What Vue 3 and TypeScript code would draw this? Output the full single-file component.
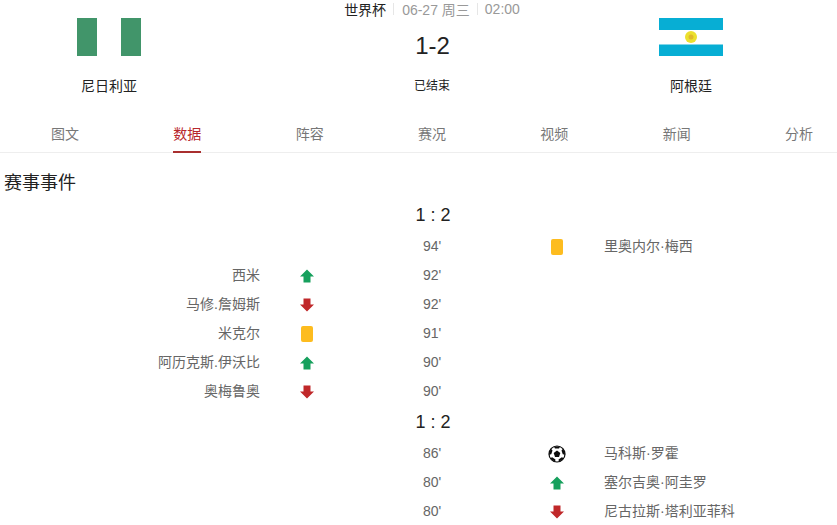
<script setup lang="ts">
type Kind = 'up' | 'down' | 'card' | 'ball'
interface Row { score?: string; min?: string; left?: string; leftIcon?: Kind; right?: string; rightIcon?: Kind }

const tabs = ['图文', '数据', '阵容', '赛况', '视频', '新闻', '分析']
const angles = [0, 72, 144, 216, 288]
const rows: Row[] = [
  { score: '1 : 2' },
  { min: "94'", right: '里奥内尔·梅西', rightIcon: 'card' },
  { min: "92'", left: '西米', leftIcon: 'up' },
  { min: "92'", left: '马修.詹姆斯', leftIcon: 'down' },
  { min: "91'", left: '米克尔', leftIcon: 'card' },
  { min: "90'", left: '阿历克斯.伊沃比', leftIcon: 'up' },
  { min: "90'", left: '奥梅鲁奥', leftIcon: 'down' },
  { score: '1 : 2' },
  { min: "86'", right: '马科斯·罗霍', rightIcon: 'ball' },
  { min: "80'", right: '塞尔吉奥·阿圭罗', rightIcon: 'up' },
  { min: "80'", right: '尼古拉斯·塔利亚菲科', rightIcon: 'down' },
]
</script>

<template>
  <div class="page">
    <header class="match">
      <div class="team">
        <svg class="flag" viewBox="0 0 64 38" width="64" height="38">
          <rect width="20" height="38" fill="#41956a" />
          <rect x="44" width="20" height="38" fill="#41956a" />
        </svg>
        <div class="team-name">尼日利亚</div>
      </div>
      <div class="center">
        <div class="meta">
          <span class="league">世界杯</span><i class="sep first"></i><span>06-27 周三</span><i class="sep"></i><span>02:00</span>
        </div>
        <div class="score">1-2</div>
        <div class="status">已结束</div>
      </div>
      <div class="team">
        <svg class="flag" viewBox="0 0 64 38" width="64" height="38">
          <rect width="64" height="12" fill="#07aed4" />
          <rect y="26.5" width="64" height="11.5" fill="#07aed4" />
          <circle cx="32" cy="19" r="6" fill="#ece02e" />
          <circle cx="32" cy="19" r="2.5" fill="#e0b92a" />
        </svg>
        <div class="team-name">阿根廷</div>
      </div>
    </header>

    <nav class="tabs">
      <a v-for="t in tabs" :key="t" class="tab" :class="{ active: t === '数据' }">{{ t }}</a>
    </nav>

    <h2 class="title">赛事事件</h2>

    <section class="events">
      <template v-for="(r, i) in rows" :key="i">
        <div v-if="r.score" class="row score-row"><span class="mid big">{{ r.score }}</span></div>
        <div v-else class="row">
          <span class="lname">{{ r.left }}</span>
          <span class="icon">
            <template v-if="r.leftIcon">
              <svg v-if="r.leftIcon === 'up'" width="14" height="14" viewBox="0 0 14 14"><path d="M7 .5 14 7.5H10.5v6h-7v-6H0z" fill="#16a05d" /></svg>
              <svg v-else-if="r.leftIcon === 'down'" width="14" height="14" viewBox="0 0 14 14"><path d="M7 13.5 0 6.5H3.5v-6h7v6H14z" fill="#c0282a" /></svg>
              <span v-else class="card"></span>
            </template>
          </span>
          <span class="mid">{{ r.min }}</span>
          <span class="icon">
            <template v-if="r.rightIcon">
              <svg v-if="r.rightIcon === 'up'" width="14" height="14" viewBox="0 0 14 14"><path d="M7 .5 14 7.5H10.5v6h-7v-6H0z" fill="#16a05d" /></svg>
              <svg v-else-if="r.rightIcon === 'down'" width="14" height="14" viewBox="0 0 14 14"><path d="M7 13.5 0 6.5H3.5v-6h7v6H14z" fill="#c0282a" /></svg>
              <svg v-else-if="r.rightIcon === 'ball'" width="18" height="18" viewBox="0 0 18 18">
                <circle cx="9" cy="9" r="8" fill="#fff" stroke="#0c0c0c" stroke-width="1.2" />
                <path d="M9 5.6l3.3 2.4-1.3 3.9H7L5.7 8z" fill="#0c0c0c" />
                <path
                  v-for="a in angles"
                  :key="a"
                  d="M5.8 1.4h6.4L11 3.6H7z"
                  fill="#0c0c0c"
                  :transform="`rotate(${a} 9 9)`"
                />
              </svg>
              <span v-else class="card"></span>
            </template>
          </span>
          <span class="rname">{{ r.right }}</span>
        </div>
      </template>
    </section>
  </div>
</template>

<style>
html, body { margin: 0; background: #fff; overflow: hidden; }
</style>

<style scoped>
.page {
  width: 837px;
  height: 525px;
  overflow: hidden;
  font-family: "Liberation Sans", "Noto Sans CJK SC", sans-serif;
  font-size: 14px;
  color: #666;
}
.match {
  display: grid;
  grid-template-columns: 218px 428px 90px;
  height: 112px;
}
.team {
  display: flex;
  flex-direction: column;
  align-items: center;
  padding-top: 18px;
}
.flag { display: block; flex: none; }
.team-name {
  margin-top: 20px;
  line-height: 20px;
  color: #222;
  white-space: nowrap;
}
.center {
  display: flex;
  flex-direction: column;
  align-items: center;
}
.meta {
  display: flex;
  align-items: center;
  height: 18px;
  margin: 0 0 2px 1px;
  color: #999;
  white-space: nowrap;
}
.league { color: #222; font-size: 14px; margin-left: -1px; }
.sep {
  width: 1px;
  height: 12px;
  margin: 0 7px;
  background: #e6e6e6;
}
.sep.first { margin-right: 8px; }
.score {
  margin-top: 10px;
  padding-left: 1px;
  font-size: 24px;
  line-height: 32px;
  color: #222;
}
.status {
  margin-top: 14px;
  font-size: 12px;
  line-height: 20px;
  color: #222;
}
.tabs {
  display: flex;
  justify-content: space-between;
  height: 40px;
  padding: 0 24px 0 51px;
  border-bottom: 1px solid #eee;
  box-sizing: content-box;
}
.tab {
  line-height: 20px;
  padding-top: 12px;
  height: 40px;
  box-sizing: border-box;
  color: #777;
}
.tab.active { color: #b8282d; border-bottom: 2px solid #a92f2f; height: 41px; }
.title {
  margin: 0;
  padding: 18px 0 0 4px;
  height: 28px;
  font-size: 18px;
  font-weight: 400;
  line-height: 24px;
  color: #222;
  box-sizing: content-box;
}
.row {
  display: grid;
  grid-template-columns: 260px 93px 158px 92px 1fr;
  height: 29px;
  align-items: center;
  white-space: nowrap;
}
.score-row { height: 33px; }
.lname { grid-column: 1; text-align: right; padding-bottom: 4px; }
.mid { grid-column: 3; text-align: center; padding-bottom: 2px; }
.big { font-size: 18px; color: #222; padding: 0 0 0 2px; }
.icon {
  display: flex;
  align-items: center;
  justify-content: center;
}
.rname { padding: 0 0 4px 1px; }
.card {
  display: block;
  width: 12px;
  height: 16px;
  border-radius: 2px;
  background: #fdbc1f;
}
</style>
